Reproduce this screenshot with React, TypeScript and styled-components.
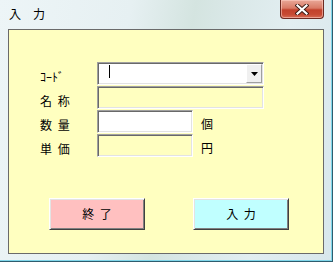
import React from "react";
import styled, { createGlobalStyle } from "styled-components";

const GlobalStyle = createGlobalStyle`
  html, body { margin: 0; padding: 0; background: #ffffff; }
  body { font-family: "Noto Sans CJK JP", "Noto Sans", sans-serif; color: #000; }
  * { box-sizing: border-box; }
`;

const Window = styled.div`
  width: 333px;
  height: 262px;
  display: flex;
  flex-direction: column;
  background: linear-gradient(
    100deg,
    #edf5f7 0%,
    #e6f0f2 35%,
    #d4e4e0 52%,
    #dae8e8 62%,
    #e2eef1 78%,
    #d8e7ec 100%
  );
  border-right: 1px solid #2e5d6e;
  border-bottom: 1px solid #2e5d6e;
  box-shadow: inset -1px -1px 0 #7fd6ea;
  position: relative;
`;

const TitleBar = styled.div`
  height: 29px;
  display: flex;
  align-items: flex-start;
  justify-content: space-between;
  padding-left: 9px;
  flex-shrink: 0;
`;

const Title = styled.div`
  font-size: 12px;
  line-height: 12px;
  margin-top: 8px;
  color: #000;
  letter-spacing: 0;
`;

const CloseButton = styled.div`
  width: 44px;
  height: 19px;
  margin-right: 8px;
  border: 1px solid #6c2a22;
  border-top: none;
  border-radius: 0 0 4px 4px;
  background: linear-gradient(
    to bottom,
    #e9a898 0%,
    #d97a66 45%,
    #c2412c 55%,
    #c74a33 80%,
    #d56b55 100%
  );
  box-shadow: inset 0 0 0 1px rgba(255, 210, 200, 0.55);
  display: flex;
  align-items: center;
  justify-content: center;
`;

const Client = styled.div`
  margin: 0 8px 0 8px;
  height: 225px;
  background: #ffffc0;
  border: 1px solid #6a6a6a;
  padding-top: 32px;
  flex-shrink: 0;
`;

const Form = styled.div`
  display: flex;
  flex-direction: column;
  gap: 1px;
  padding-left: 31px;
`;

const Row = styled.div`
  display: flex;
  align-items: flex-start;
  height: 23px;
`;

const Label = styled.div`
  width: 57px;
  font-size: 12px;
  line-height: 12px;
  padding-top: 9px;
  word-spacing: 3px;
  white-space: pre;
`;

const Field = styled.div<{ $w: number; $bg: string }>`
  width: ${(p) => p.$w}px;
  height: 23px;
  background: ${(p) => p.$bg};
  border: 1px solid;
  border-color: #a0a0a0 #ffffff #ffffff #a0a0a0;
  box-shadow: inset 1px 1px 0 #696969, inset -1px -1px 0 #e3e3e3;
  padding: 1px;
  display: flex;
  align-items: stretch;
`;

const FieldText = styled.div`
  flex: 1;
  display: flex;
  align-items: flex-start;
  padding-left: 10px;
  padding-top: 1px;
`;

const Caret = styled.div`
  width: 1px;
  height: 13px;
  background: #000;
`;

const DropButton = styled.div`
  width: 16px;
  background: #f0f0f0;
  border: 1px solid;
  border-color: #ffffff #a0a0a0 #a0a0a0 #ffffff;
  display: flex;
  align-items: center;
  justify-content: center;
`;

const Unit = styled.div`
  margin-left: 8px;
  font-size: 12px;
  line-height: 12px;
  padding-top: 8px;
`;

const ButtonRow = styled.div`
  display: flex;
  gap: 48px;
  padding-left: 40px;
  margin-top: 41px;
`;

const Button = styled.div<{ $bg: string }>`
  width: 96px;
  height: 32px;
  background: ${(p) => p.$bg};
  border: 1px solid;
  border-color: #ffffff #404040 #404040 #ffffff;
  box-shadow: inset 1px 1px 0 #e3e3e3, inset -1px -1px 0 #808080;
  display: flex;
  align-items: center;
  justify-content: center;
  font-size: 12px;
  line-height: 12px;
  word-spacing: 3px;
  white-space: pre;
  padding-bottom: 1px;
`;

export default function App() {
  return (
    <>
      <GlobalStyle />
      <Window>
        <TitleBar>
          <Title>入　力</Title>
          <CloseButton>
            <svg width="14" height="11" viewBox="0 0 14 11">
              <path
                d="M2.5 1.5 L11.5 9.5 M11.5 1.5 L2.5 9.5"
                stroke="#3a1a14"
                strokeWidth="4"
                strokeLinecap="square"
              />
              <path
                d="M2.5 1.5 L11.5 9.5 M11.5 1.5 L2.5 9.5"
                stroke="#ffffff"
                strokeWidth="2.2"
                strokeLinecap="square"
              />
            </svg>
          </CloseButton>
        </TitleBar>
        <Client>
          <Form>
            <Row>
              <Label>ｺｰﾄﾞ</Label>
              <Field $w={167} $bg="#ffffff">
                <FieldText>
                  <Caret />
                </FieldText>
                <DropButton>
                  <svg width="7" height="4" viewBox="0 0 7 4">
                    <path d="M0 0 H7 L3.5 4 Z" fill="#000" />
                  </svg>
                </DropButton>
              </Field>
            </Row>
            <Row>
              <Label>名 称</Label>
              <Field $w={167} $bg="#ffffc0" />
            </Row>
            <Row>
              <Label>数 量</Label>
              <Field $w={96} $bg="#ffffff" />
              <Unit>個</Unit>
            </Row>
            <Row>
              <Label>単 価</Label>
              <Field $w={96} $bg="#ffffc0" />
              <Unit>円</Unit>
            </Row>
          </Form>
          <ButtonRow>
            <Button $bg="#ffc0c0">終 了</Button>
            <Button $bg="#c0ffff">入 力</Button>
          </ButtonRow>
        </Client>
      </Window>
    </>
  );
}
